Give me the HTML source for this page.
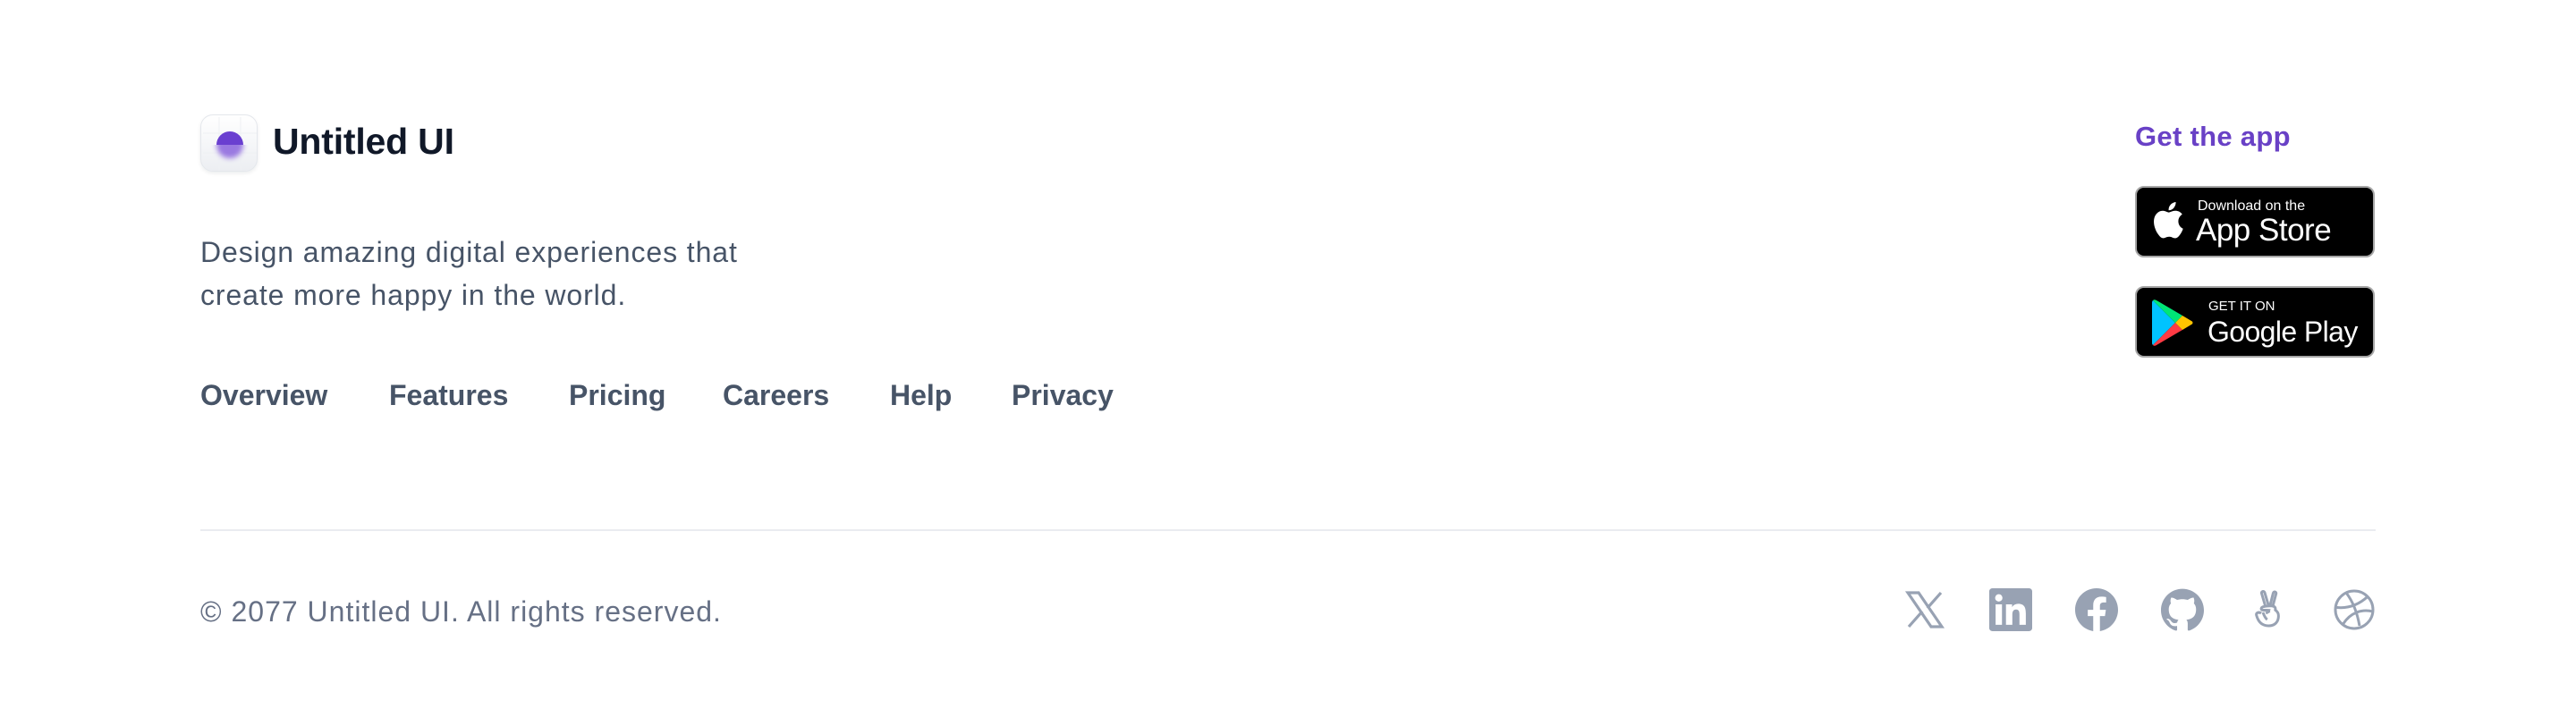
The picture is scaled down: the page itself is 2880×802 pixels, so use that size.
<!DOCTYPE html>
<html><head><meta charset="utf-8"><style>
*{margin:0;padding:0;box-sizing:border-box}
html,body{width:2880px;height:802px;background:#fff;overflow:hidden;font-family:"Liberation Sans",sans-serif}
.abs{position:absolute}
.logo{left:224px;top:128px;width:64px;height:64px;border-radius:14px;background:linear-gradient(#fff,#eceef2);border:1px solid #e4e7ec;box-shadow:0 2px 4px rgba(16,24,40,.08);overflow:hidden}
.brand{left:305px;top:132px;font-size:41px;font-weight:bold;color:#101828;letter-spacing:-0.2px;line-height:52px}
.desc{left:224px;top:258px;font-size:32px;line-height:48px;color:#475467;width:760px;letter-spacing:0.9px}
.nav{left:224px;top:420px;font-size:32px;font-weight:bold;color:#475467;line-height:44px;white-space:nowrap}
.nav span{position:absolute;top:0}
.get{left:2387px;top:133px;font-size:31px;font-weight:bold;color:#6941c6;line-height:40px;letter-spacing:0.3px}
.badge{left:2387px;width:268px;height:80px;background:#000;border:2px solid #a6a6a6;border-radius:10px;color:#fff}
.line{left:224px;top:592px;width:2432px;height:2px;background:#eaecf0}
.copy{left:224px;top:662px;font-size:32px;color:#667085;line-height:44px;letter-spacing:1px}
.ic{top:658px;width:48px;height:48px}
</style></head><body>
<div class="abs logo">
<svg width="64" height="64" viewBox="0 0 64 64">
<defs><filter id="b" x="-50%" y="-50%" width="200%" height="200%"><feGaussianBlur stdDeviation="3"/></filter><clipPath id="c"><rect x="0" y="33" width="64" height="31"/></clipPath></defs>
<path d="M2 20H62M2 42H62M20 2V62M44 2V62" stroke="#eef0f3" stroke-width="1"/>
<g clip-path="url(#c)"><circle cx="32" cy="33" r="15" fill="#8a63dd" opacity=".85" filter="url(#b)"/></g>
<path d="M17 33A15 15 0 0 1 47 33Z" fill="#6a3fd0"/>
</svg></div>
<div class="abs brand">Untitled UI</div>
<div class="abs desc">Design amazing digital experiences that<br>create more happy in the world.</div>
<div class="abs nav">
<span style="left:0">Overview</span><span style="left:211px">Features</span><span style="left:412px">Pricing</span><span style="left:584px">Careers</span><span style="left:771px">Help</span><span style="left:907px">Privacy</span>
</div>
<div class="abs get">Get the app</div>
<div class="abs badge" style="top:208px">
<svg class="abs" style="left:17px;top:14px" width="36" height="44" viewBox="0 0 24 29"><path fill="#fff" d="M19.6 15.4c0-3.4 2.8-5 2.9-5.1-1.6-2.3-4-2.6-4.9-2.6-2.1-.2-4.1 1.2-5.1 1.200-1.1 0-2.7-1.2-4.4-1.2-2.3 0-4.4 1.3-5.600 3.4-2.4 4.1-.6 10.2 1.700 13.6 1.100 1.6 2.500 3.5 4.200 3.4 1.700-.1 2.300-1.1 4.400-1.1 2 0 2.600 1.100 4.400 1.100 1.800 0 3-1.700 4.100-3.300 1.300-1.900 1.800-3.700 1.800-3.800 0 0-3.500-1.300-3.500-5.600zM16.3 5.4c.9-1.1 1.5-2.7 1.4-4.2-1.3.1-3 .9-3.9 2-.9 1-1.6 2.6-1.4 4.1 1.5.1 3-.8 3.9-1.9z"/></svg>
<div class="abs" style="left:68px;top:12px;font-size:16px;line-height:18px">Download on the</div>
<div class="abs" style="left:66px;top:28px;font-size:35px;line-height:40px;letter-spacing:-0.5px">App Store</div>
</div>
<div class="abs badge" style="top:320px">
<svg class="abs" style="left:16px;top:12px" width="48" height="54" viewBox="0 0 48 54">
<path d="M2 2L27 27 2 52C1 51 1 50 1 49V5C1 4 1 3 2 2Z" fill="#00c3ff"/>
<path d="M2 2L27 27 35 19 6 2C4.5 1 3 1 2 2Z" fill="#00e676"/>
<path d="M2 52L27 27 35 35 6 52C4.5 53 3 53 2 52Z" fill="#ff3a44"/>
<path d="M35 19L45 25C47 26 47 28 45 29L35 35 27 27Z" fill="#ffc400"/>
</svg>
<div class="abs" style="left:80px;top:12px;font-size:15px;line-height:18px">GET IT ON</div>
<div class="abs" style="left:79px;top:29px;font-size:32px;line-height:40px;letter-spacing:-0.6px">Google Play</div>
</div>
<div class="abs line"></div>
<div class="abs copy">© 2077 Untitled UI. All rights reserved.</div>
<svg class="abs ic" style="left:2128px" viewBox="0 0 24 24"><path fill="none" stroke="#98a2b3" stroke-width="1.6" d="M2.5 2.5h6l13 19h-6zM21 2.5l-7.6 8.6M3 21.5l7.6-8.6"/></svg>
<svg class="abs ic" style="left:2224px" viewBox="0 0 24 24"><path fill="#98a2b3" d="M20.447 20.452h-3.554v-5.569c0-1.328-.027-3.037-1.852-3.037-1.853 0-2.136 1.445-2.136 2.939v5.667H9.351V9h3.414v1.561h.046c.477-.9 1.637-1.850 3.370-1.850 3.601 0 4.267 2.370 4.267 5.455v6.286zM5.337 7.433a2.062 2.062 0 1 1 0-4.125 2.062 2.062 0 0 1 0 4.125zM7.119 20.452H3.555V9h3.564v11.452zM22.225 0H1.771C.792 0 0 .774 0 1.729v20.542C0 23.227.792 24 1.771 24h20.451C23.200 24 24 23.227 24 22.271V1.729C24 .774 23.200 0 22.222 0h.003z"/></svg>
<svg class="abs ic" style="left:2320px" viewBox="0 0 24 24"><path fill="#98a2b3" d="M24 12.073C24 5.405 18.627 0 12 0S0 5.405 0 12.073C0 18.1 4.388 23.094 10.125 24v-8.437H7.078v-3.49h3.047V9.41c0-3.025 1.792-4.697 4.533-4.697 1.312 0 2.686.236 2.686.236v2.971H15.83c-1.491 0-1.956.93-1.956 1.886v2.267h3.328l-.532 3.49h-2.796V24C19.612 23.094 24 18.1 24 12.073z"/></svg>
<svg class="abs ic" style="left:2416px" viewBox="0 0 24 24"><path fill="#98a2b3" d="M12 .297c-6.63 0-12 5.373-12 12 0 5.303 3.438 9.8 8.205 11.385.6.113.82-.258.82-.577 0-.285-.01-1.04-.015-2.04-3.338.724-4.042-1.61-4.042-1.61C4.422 18.07 3.633 17.7 3.633 17.7c-1.087-.744.084-.729.084-.729 1.205.084 1.838 1.236 1.838 1.236 1.07 1.835 2.809 1.305 3.495.998.108-.776.417-1.305.76-1.605-2.665-.3-5.466-1.332-5.466-5.93 0-1.31.465-2.38 1.235-3.22-.135-.303-.54-1.523.105-3.176 0 0 1.005-.322 3.3 1.23.96-.267 1.98-.399 3-.405 1.02.006 2.04.138 3 .405 2.28-1.552 3.285-1.23 3.285-1.23.645 1.653.24 2.873.12 3.176.765.84 1.23 1.91 1.23 3.22 0 4.61-2.805 5.625-5.475 5.92.42.36.81 1.096.81 2.22 0 1.606-.015 2.896-.015 3.286 0 .315.21.69.825.57C20.565 22.092 24 17.592 24 12.297c0-6.627-5.373-12-12-12"/></svg>
<svg class="abs ic" style="left:2512px" viewBox="0 0 24 24"><path fill="none" stroke="#98a2b3" stroke-width="1.5" stroke-linejoin="round" d="M10.5 10.5L8.3 3c-.4-1.3 1.3-1.8 1.7-.5l2 6.8M13 9.5l1.7-6.7c.3-1.3 2-.9 1.6.4l-1.8 6.8M8 14c-1.5-1-3-.2-2.6 1.2.6 2.2 2 5.8 6.8 5.8 3.5 0 5.5-2.3 5.5-5.5 0-2-1-2.8-1.8-3.3.3-1.4-.3-2.2-2-2.3-2.2-.1-5 .2-5.6.9-.5.6-.2 1.3.6 1.4 1.2.1 3.5 0 4.2.2M9 13.5c.5 1.4 1.5 3.4 2.4 4M10.6 14l2.2-1.3"/></svg>
<svg class="abs ic" style="left:2608px" viewBox="0 0 24 24"><g fill="none" stroke="#98a2b3" stroke-width="1.5"><circle cx="12" cy="12" r="10.5"/><path d="M7.5 2.5c3.5 4.5 6 10 7.5 18.5M2 10.7c6 .7 12-1 17.5-6M22.4 13c-6-1.5-12.5.5-16.6 7"/></g></svg>
</body></html>
